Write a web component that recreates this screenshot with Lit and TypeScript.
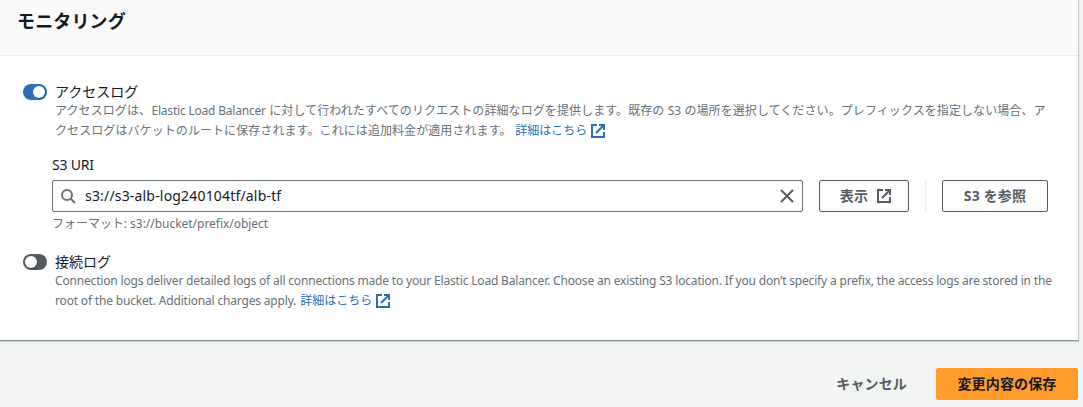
import { LitElement, html, css, svg } from "lit";
import { customElement, property } from "lit/decorators.js";

const externalIcon = html`<svg class="ext" viewBox="0 0 16 16" width="16" height="16" fill="none" stroke="currentColor" stroke-width="2">
  ${svg`<path d="M9 2h5v5"></path><path d="M6 10l8-8"></path><path d="M14 9.05v4.95h-12v-12h5"></path>`}
</svg>`;

@customElement("toggle-switch")
class ToggleSwitch extends LitElement {
  @property({ type: Boolean, reflect: true }) checked = false;
  static styles = css`
    :host { display: flex; box-sizing: border-box; flex: none; width: 24px; height: 16px; padding: 2px; border-radius: 8px; background: #545b64; }
    :host([checked]) { background: #2a6fb8; justify-content: flex-end; }
    .knob { width: 12px; height: 12px; border-radius: 50%; background: #fff; box-shadow: 1px 1px 1px rgba(0, 0, 0, 0.25); }
  `;
  render() {
    return html`<span class="knob"></span>`;
  }
}

@customElement("app-root")
class AppRoot extends LitElement {
  static styles = css`
    :host { display: block; box-sizing: border-box; width: 100%; height: 407px; overflow: hidden; background: #f2f3f3; color: #16191f;
      font-family: "Noto Sans", "Noto Sans CJK JP", sans-serif; font-size: 14px; line-height: 20px; }
    * { box-sizing: border-box; }
    svg { display: block; flex: none; }
    .panel { width: 1079px; height: 341px; background: #fff; border-right: 1px solid #c4c9ca; border-bottom: 1px solid #879596; box-shadow: 0 1px 1px rgba(0, 28, 36, 0.15); }
    header { height: 56px; padding: 9px 17px 0; background: #fafafa; border-bottom: 1px solid #eaeded; }
    h2 { margin: 0; font-size: 18px; line-height: 24px; font-weight: 700; letter-spacing: 0.15px; }
    .row { display: flex; gap: 8px; padding-left: 23px; }
    .first { padding-top: 26px; }
    .second { padding-top: 18px; }
    toggle-switch { margin-top: 2px; }
    .title { height: 19px; line-height: 20px; white-space: nowrap; }
    .line { display: flex; align-items: center; height: 20px; font-size: 12px; line-height: 20px; color: #687078; white-space: pre; letter-spacing: 0.08px; }
    .link { display: flex; align-items: center; gap: 3px; color: #2a6fb8; letter-spacing: 0; }
    .after { margin-left: 4px; }
    .first .link { gap: 2.4px; margin-left: 3.6px; }
    .elb { letter-spacing: -0.2px; margin-left: 0.4px; margin-right: 0.5px; }
    .con { letter-spacing: -0.175px; }
    .s3 { padding: 14px 0 0 52px; }
    .controls { display: flex; align-items: center; height: 32px; margin-top: 5px; }
    .label { letter-spacing: -0.2px; }
    .input { display: flex; align-items: center; width: 751px; height: 32px; padding: 0 7px; border: 1px solid #687078; border-radius: 2px; }
    .value { flex: 1; margin-left: 9px; letter-spacing: 0.18px; }
    .glyph { color: #687078; }
    .close { color: #545b64; }
    .btn { display: flex; align-items: center; justify-content: center; gap: 8px; height: 32px; border: 1px solid #545b64; border-radius: 2px; color: #545b64; font-weight: 700; white-space: pre; letter-spacing: 0.15px; }
    .view { width: 90px; margin-left: 16px; padding-left: 4px; }
    .sep { width: 1px; height: 32px; margin: 0 16px; background: #eaeded; }
    .browse { width: 106px; }
    .hint { letter-spacing: -0.03px; margin-top: 2px; }
    footer { display: flex; justify-content: flex-end; padding: 27px 5px 0 0; }
    .cancel { border-color: transparent; margin-right: 28px; }
    .save { width: 142px; border-color: #ff9c2b; background: #ff9c2b; color: #16191f; }
  `;
  render() {
    return html`
      <section class="panel">
        <header><h2>モニタリング</h2></header>
        <div class="row first">
          <toggle-switch checked></toggle-switch>
          <div>
            <div class="title">アクセスログ</div>
            <div class="line"><span>アクセスログは、</span><span class="elb">Elastic Load Balancer </span><span>に対して行われたすべてのリクエストの詳細なログを提供します。既存の </span><span>S3 </span><span>の場所を選択してください。プレフィックスを指定しない場合、ア</span></div>
            <div class="line"><span>クセスログはバケットのルートに保存されます。これには追加料金が適用されます。</span><a class="link after"><span>詳細はこちら</span>${externalIcon}</a></div>
          </div>
        </div>
        <div class="s3">
          <div class="label">S3 URI</div>
          <div class="controls">
            <div class="input">
              <svg class="glyph" viewBox="0 0 16 16" width="16" height="16" fill="none" stroke="currentColor" stroke-width="2"><circle cx="7" cy="7" r="5"></circle><path d="M15 15l-4.5-4.5"></path></svg>
              <span class="value">s3://s3-alb-log240104tf/alb-tf</span>
              <svg class="close" viewBox="0 0 16 16" width="16" height="16" fill="none" stroke="currentColor" stroke-width="2"><path d="M2 2l12 12M14 2L2 14"></path></svg>
            </div>
            <div class="btn view"><span>表示</span>${externalIcon}</div>
            <div class="sep"></div>
            <div class="btn browse">S3 を参照</div>
          </div>
          <div class="line hint"><span>フォーマット</span><span>: s3://bucket/prefix/object</span></div>
        </div>
        <div class="row second">
          <toggle-switch></toggle-switch>
          <div>
            <div class="title">接続ログ</div>
            <div class="line con">Connection logs deliver detailed logs of all connections made to your Elastic Load Balancer. Choose an existing S3 location. If you don’t specify a prefix, the access logs are stored in the</div>
            <div class="line"><span class="con">root of the bucket. Additional charges apply.</span><a class="link after"><span>詳細はこちら</span>${externalIcon}</a></div>
          </div>
        </div>
      </section>
      <footer>
        <div class="btn cancel">キャンセル</div>
        <div class="btn save">変更内容の保存</div>
      </footer>
    `;
  }
}
